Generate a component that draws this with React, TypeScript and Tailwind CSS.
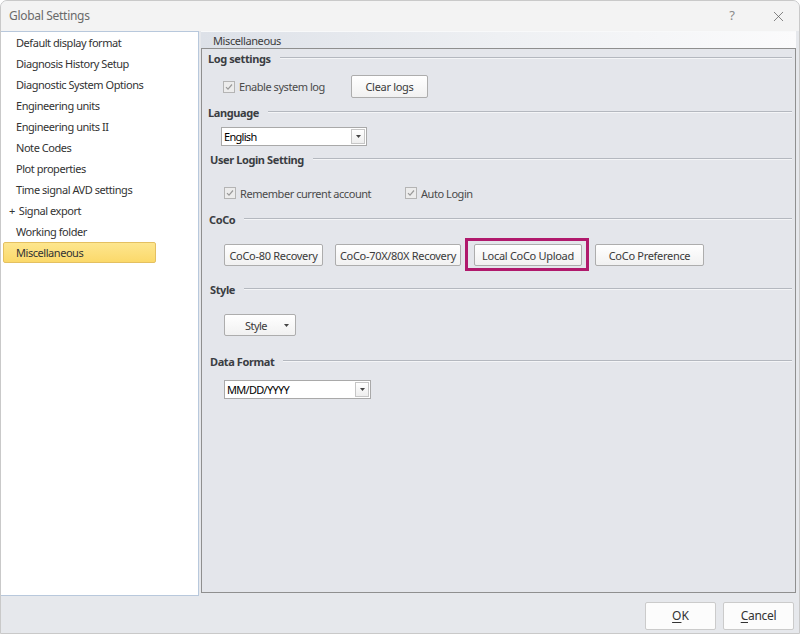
import { X } from "lucide-react";

const navItems = [
  "Default display format",
  "Diagnosis History Setup",
  "Diagnostic System Options",
  "Engineering units",
  "Engineering units II",
  "Note Codes",
  "Plot properties",
  "Time signal AVD settings",
  "Signal export",
  "Working folder",
  "Miscellaneous",
];

const font = { fontFamily: '"Noto Sans", "Open Sans", sans-serif' };

function Heading({ label, indent = "" }: { label: string; indent?: string }) {
  return (
    <div className={`flex items-center h-[16px] pr-[3px] ${indent}`}>
      <span className="text-[11px] font-bold text-[#3a3d42] tracking-[-0.4px] leading-none">{label}</span>
      <div className="flex-1 ml-[9px] h-[2px] border-t border-[#b4b8bf] border-b border-b-[#f4f5f7]" />
    </div>
  );
}

function Check({ label }: { label: string }) {
  return (
    <div className="flex items-center">
      <span className="w-[12px] h-[12px] border border-[#b4b4b4] bg-[#ececec] flex items-center justify-center">
        <svg width="8" height="8" viewBox="0 0 8 8">
          <path d="M1 4.2 L3 6.2 L7 1.5" fill="none" stroke="#9a9a9a" strokeWidth="1.2" />
        </svg>
      </span>
      <span className="ml-[4px] text-[11px] text-[#4a4a4a] tracking-[-0.45px] leading-none">{label}</span>
    </div>
  );
}

function Button({ label, className = "" }: { label: string; className?: string }) {
  return (
    <div
      className={`flex items-center justify-center border border-[#adadad] rounded-[2px] bg-gradient-to-b from-white to-[#f1f1f1] text-[11px] text-[#3a3a3a] tracking-[-0.3px] leading-none ${className}`}
    >
      {label}
    </div>
  );
}

function Select({ value, className = "" }: { value: string; className?: string }) {
  return (
    <div className={`flex items-center border border-[#a9a9a9] bg-white ${className}`}>
      <span className="flex-1 pl-[2px] text-[11px] text-black tracking-[-0.7px] leading-none">{value}</span>
      <span className="w-[14px] h-[15px] mr-[1px] border border-[#c6c6c6] bg-gradient-to-b from-white to-[#eeeeee] flex items-center justify-center">
        <svg width="5" height="3" viewBox="0 0 5 3">
          <path d="M0 0 H5 L2.5 3 Z" fill="#444" />
        </svg>
      </span>
    </div>
  );
}

export default function App() {
  return (
    <div
      className="w-[800px] h-[634px] flex flex-col bg-[#e6e8ec] border border-[#c9c9c9] rounded-t-[7px] overflow-hidden"
      style={font}
    >
      {/* Title bar */}
      <div className="h-[30px] shrink-0 flex items-center bg-[#f3f3f3] pl-[8px]">
        <span className="text-[12px] text-[#6a6a6a] tracking-[-0.3px]">Global Settings</span>
        <span className="ml-auto text-[13px] text-[#8a8a8a] mr-[35px]">?</span>
        <X size={17} strokeWidth={1} className="text-[#555] mr-[12px]" />
      </div>

      {/* Body */}
      <div className="flex h-[565px] shrink-0">
        {/* Nav list */}
        <div className="w-[198px] h-full bg-white border border-[#b8c8dc] border-l-0 pl-[2px]">
          {navItems.map((item) => {
            const selected = item === "Miscellaneous";
            const expand = item === "Signal export";
            return (
              <div
                key={item}
                className={`h-[21px] w-[153px] flex items-center text-[11px] text-[#333] tracking-[-0.45px] leading-none rounded-[2px] ${
                  selected
                    ? "bg-gradient-to-b from-[#fde68e] to-[#fbd96a] border border-[#e4c061] pl-[12px]"
                    : "pl-[13px]"
                }`}
              >
                {expand ? (
                  <>
                    <span className="-ml-[7px] mr-[4px] text-[11px]">+</span>
                    {item}
                  </>
                ) : (
                  item
                )}
              </div>
            );
          })}
        </div>

        {/* Settings pane */}
        <div className="flex-1 flex flex-col ml-[2px] mr-[3px] mb-[3px]">
          <div className="h-[17px] shrink-0 flex items-center pl-[12px] bg-gradient-to-r from-[#dde1e8] via-[#eef0f3] to-[#fbfbfc] border-t border-[#f8f9fa]">
            <span className="text-[11px] text-[#3c3c3c] tracking-[-0.4px] leading-none">Miscellaneous</span>
          </div>
          <div className="flex-1 border border-[#8f8f8f] bg-[#e4e6eb] flex flex-col pl-[6px] pt-[1px]">
            <Heading label="Log settings" />
            <div className="flex items-center mt-[9px] h-[23px] pl-[15px]">
              <div className="w-[128px]">
                <Check label="Enable system log" />
              </div>
              <Button label="Clear logs" className="w-[77px] h-[23px]" />
            </div>

            <Heading label="Language" indent="mt-[6px]" />
            <Select value="English" className="mt-[7px] ml-[13px] w-[146px] h-[19px]" />

            <Heading label="User Login Setting" indent="mt-[5px] pl-[2px]" />
            <div className="flex items-center mt-[18px] h-[16px] pl-[16px]">
              <div className="w-[181px]">
                <Check label="Remember current account" />
              </div>
              <Check label="Auto Login" />
            </div>

            <Heading label="CoCo" indent="mt-[10px] pl-[1px]" />
            <div className="flex items-center mt-[17px] pl-[16px]">
              <Button label="CoCo-80 Recovery" className="w-[99px] h-[22px]" />
              <Button label="CoCo-70X/80X Recovery" className="ml-[12px] w-[126px] h-[22px]" />
              <div className="relative ml-[13px]">
                <Button label="Local CoCo Upload" className="w-[108px] h-[22px]" />
                <span className="absolute -left-[9px] -top-[6px] -right-[7px] -bottom-[5px] border-[3px] border-[#b0196c]" />
              </div>
              <Button label="CoCo Preference" className="ml-[13px] w-[109px] h-[22px]" />
            </div>

            <Heading label="Style" indent="mt-[15px] pl-[2px]" />
            <div className="mt-[17px] ml-[16px] w-[72px] h-[22px] flex items-center border border-[#adadad] rounded-[2px] bg-gradient-to-b from-white to-[#f1f1f1]">
              <span className="flex-1 text-center text-[11px] text-[#3a3a3a] tracking-[-0.5px] leading-none pl-[3px]">Style</span>
              <svg width="5" height="3" viewBox="0 0 5 3" className="mr-[6px]">
                <path d="M0 0 H5 L2.5 3 Z" fill="#444" />
              </svg>
            </div>

            <Heading label="Data Format" indent="mt-[17px] pl-[2px]" />
            <Select value="MM/DD/YYYY" className="mt-[11px] ml-[16px] w-[147px] h-[19px]" />
          </div>
        </div>
      </div>

      {/* Footer */}
      <div className="flex-1 flex items-start justify-end pt-[6px] pr-[5px] gap-[7px]">
        <div className="w-[71px] h-[28px] flex items-center justify-center border border-[#cbcbcb] rounded-[2px] bg-[#fcfcfc] text-[12px] text-[#333]">
          <span className="underline underline-offset-2">O</span>K
        </div>
        <div className="w-[71px] h-[28px] flex items-center justify-center border border-[#cbcbcb] rounded-[2px] bg-[#fcfcfc] text-[12px] text-[#333] tracking-[-0.3px]">
          <span className="underline underline-offset-2">C</span>ancel
        </div>
      </div>
    </div>
  );
}
